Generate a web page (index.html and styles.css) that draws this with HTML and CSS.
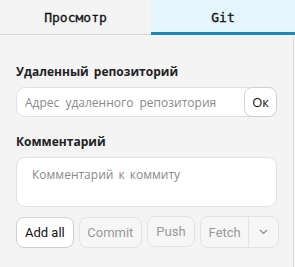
FILE: index.html
```html
<html>
<head>
    <title>Git</title>
    <link rel="stylesheet" href="styles.css">
</head>
<body>
    <div class="tabs">
        <div class="tab">Просмотр</div>
        <div class="tab active">Git</div>
    </div>

    <div class="panel">
        <div class="label">Удаленный репозиторий</div>
        <div class="remote">
            <input class="remote-input" type="text" placeholder="Адрес удаленного репозитория">
            <button class="btn ok">Ок</button>
        </div>

        <div class="label">Комментарий</div>
        <textarea class="comment" placeholder="Комментарий к коммиту"></textarea>

        <div class="actions">
            <button class="btn">Add all</button>
            <button class="btn disabled">Commit</button>
            <button class="btn disabled push">Push</button>
            <div class="split">
                <button class="btn disabled split-main">Fetch</button>
                <button class="btn disabled split-arrow">
                    <svg width="9" height="6" viewBox="0 0 9 6"><path d="M1 1 L4.5 4.5 L8 1" fill="none" stroke="#888" stroke-width="1.2"/></svg>
                </button>
            </div>
        </div>
    </div>
</body>
</html>
```

FILE: styles.css
```css
body {
    margin: 0;
    background-color: #f4f4f4;
    font-family: 'Open Sans', sans-serif;
}

.tabs {
    display: flex;
    height: 35px;
}

.tab {
    flex: 151;
    display: flex;
    align-items: center;
    justify-content: center;
    font-family: 'DejaVu Sans Mono', monospace;
    font-size: 13px;
    color: #111;
    border-bottom: 1px solid #d6d6d6;
    box-sizing: border-box;
    padding-top: 1px;
    -webkit-text-stroke: 0.3px #111;
}

.tab.active {
    flex: 144;
    background-color: #e4f5fd;
    border-bottom: 3px solid #1f88b9;
    padding-top: 3px;
}

.panel {
    width: 294px;
    box-sizing: border-box;
    margin-top: 2px;
    height: 230px;
    border-right: 1px solid #dcdcdc;
    padding: 26px 16px 0 16px;
}

.label {
    font-size: 12px;
    font-weight: bold;
    color: #222;
    word-spacing: 2px;
    margin-bottom: 7px;
}

.remote {
    display: flex;
    height: 30px;
    background-color: #fff;
    border: 1px solid #e2e2e2;
    border-radius: 9px;
    box-sizing: border-box;
    margin-bottom: 16px;
}

.remote-input {
    flex: 1;
    border: none;
    background: transparent;
    outline: none;
    font-family: 'Open Sans', sans-serif;
    font-size: 12px;
    word-spacing: 3px;
    padding: 0 0 0 8px;
    min-width: 0;
}

.remote-input::placeholder,
.comment::placeholder {
    color: #8a8a8a;
}

.btn {
    font-family: Roboto, sans-serif;
    font-size: 13px;
    height: 31px;
    padding: 0 8px;
    white-space: nowrap;
    background-color: #fff;
    border: 1px solid #cfcfcf;
    border-radius: 8px;
    color: #111;
}

.btn.ok {
    height: 30px;
    margin: -1px -1px -1px 0;
    padding: 0 7px;
    font-family: 'Open Sans', sans-serif;
    font-size: 13px;
    border-color: #d0d0d0;
}

.comment {
    display: block;
    width: 100%;
    height: 50px;
    box-sizing: border-box;
    resize: none;
    border: 1px solid #e2e2e2;
    border-radius: 9px;
    background-color: #fff;
    font-family: 'Open Sans', sans-serif;
    font-size: 12px;
    word-spacing: 2px;
    padding: 8px 15px;
    outline: none;
    margin-bottom: 10px;
}

.actions {
    display: flex;
    gap: 5px;
    align-items: flex-start;
}

.btn.disabled {
    background-color: #f6f6f6;
    border-color: #e3e3e3;
    color: #999;
    padding: 0 7.5px;
}

.btn.push {
    margin-top: -1px;
    padding: 0 8.5px;
}

.split {
    display: flex;
    margin-top: -1px;
}

.split-main {
    border-radius: 8px 0 0 8px;
    height: 32px;
}

.split-arrow {
    border-radius: 0 8px 8px 0;
    border-left-color: #e8e8e8;
    margin-left: -1px;
    height: 32px;
    width: 31px;
    padding: 0;
    display: flex;
    align-items: center;
    justify-content: center;
}
```
